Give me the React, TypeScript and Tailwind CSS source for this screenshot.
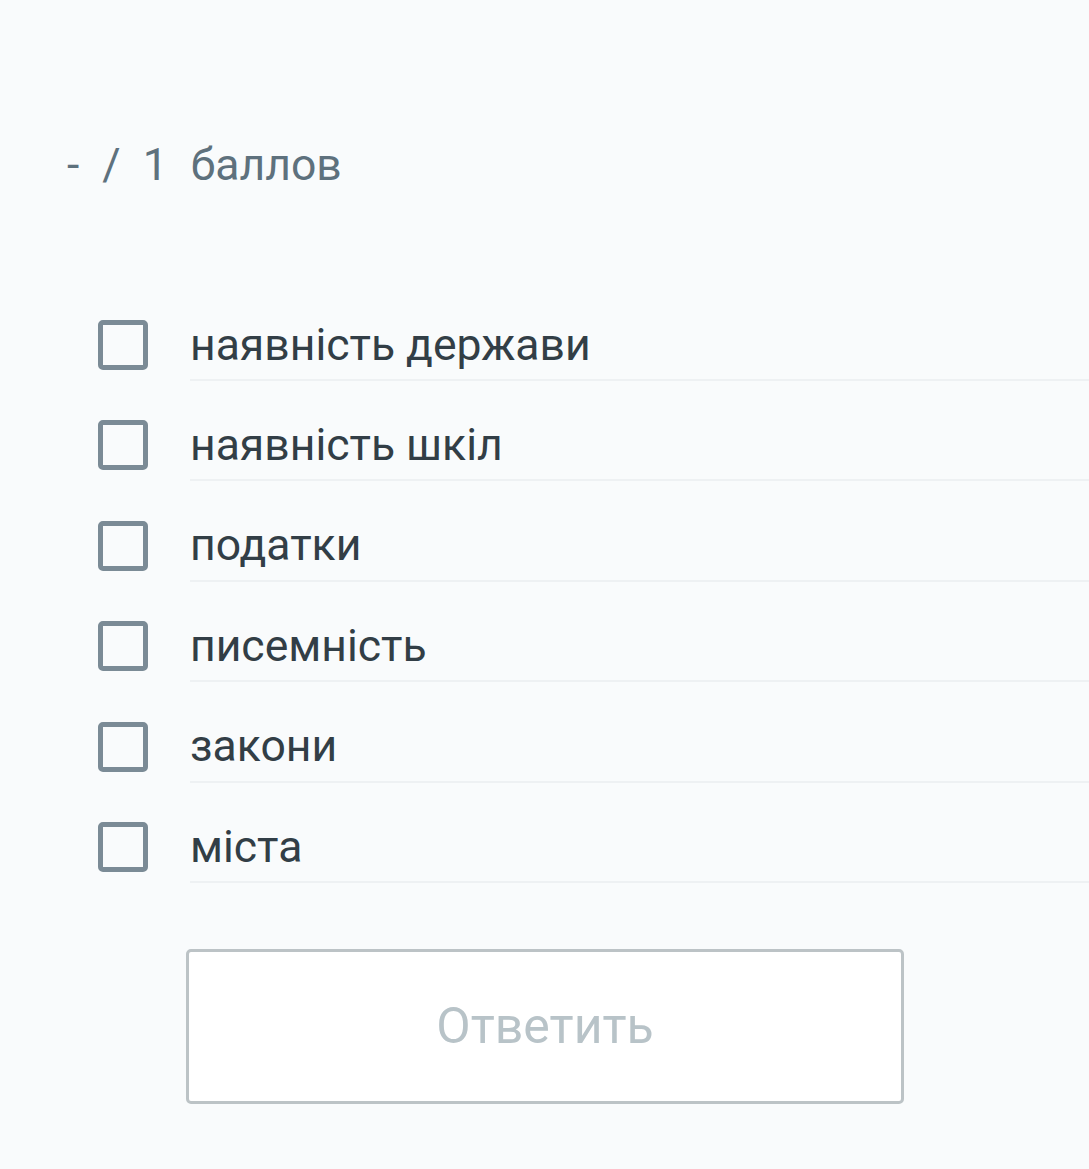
const options = [
  "наявність держави",
  "наявність шкіл",
  "податки",
  "писемність",
  "закони",
  "міста",
];

const Checkbox = () => (
  <div className="w-[50px] h-[50px] shrink-0 rounded-[5px] border-[5px] border-[#7b8b96] bg-transparent" />
);

export default function App() {
  return (
    <main
      className="min-h-[1169px] w-full bg-[#f9fbfc]"
      style={{ fontFamily: "Roboto, 'Noto Sans', sans-serif" }}
    >
      <div className="pt-[140px] pl-[67px] flex items-center text-[44.5px] leading-[50px] text-[#5e717d]">
        <span>-</span>
        <span className="ml-[23px]">/</span>
        <span className="ml-[22px]">1</span>
        <span className="ml-[23px]">баллов</span>
      </div>

      <div className="mt-[110px] flex flex-col gap-[19.4px]">
        {options.map((opt) => (
          <label key={opt} className="flex h-[81px] cursor-pointer">
            <div className="w-[190px] pt-[20px] pl-[98px]">
              <Checkbox />
            </div>
            <div className="flex-1 pt-[20px] border-b-2 border-[#eef1f3]">
              <span className="flex h-[50px] items-center text-[44.5px] text-[#323e46]">
                {opt}
              </span>
            </div>
          </label>
        ))}
      </div>

      <div className="mt-[66px] pl-[186px]">
        <button
          type="button"
          className="w-[718px] h-[155px] bg-white border-[3px] border-[#bcc3c6] rounded-[5px] text-[50px] text-[#b8c3c8]"
        >
          Ответить
        </button>
      </div>
    </main>
  );
}
